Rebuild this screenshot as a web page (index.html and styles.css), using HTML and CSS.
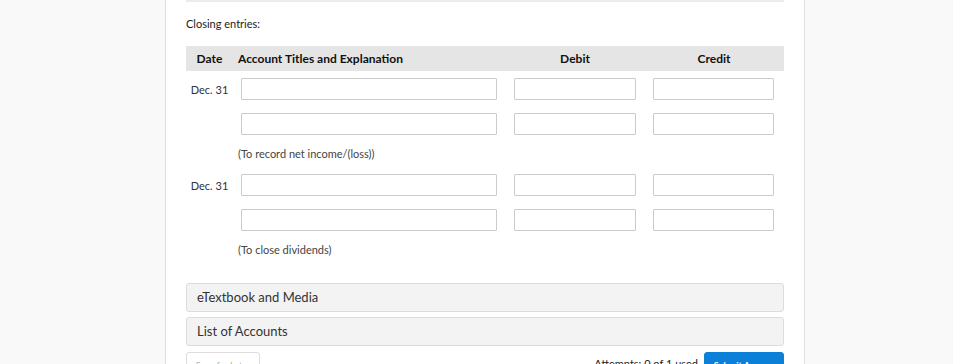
FILE: index.html
```html
<!DOCTYPE html>
<html lang="en">

<head>
    <meta charset="UTF-8">
    <title>Closing entries</title>
    <link rel="stylesheet" href="styles.css">
</head>

<body>

    <div class="page">
        <div class="page__panel">

            <div class="page__topbar"></div>

            <p class="entry__label">Closing entries:</p>

            <div class="journal">
                <div class="journal__head">
                    <div class="journal__date">Date</div>
                    <div class="journal__account">Account Titles and Explanation</div>
                    <div class="journal__amount"><span>Debit</span></div>
                    <div class="journal__amount"><span>Credit</span></div>
                </div>

                <!-- entry 1 -->
                <div class="journal__row">
                    <div class="journal__date">Dec. 31</div>
                    <div class="journal__account"><input class="field field--account" type="text"></div>
                    <div class="journal__amount"><input class="field field--debit" type="text"></div>
                    <div class="journal__amount"><input class="field field--credit" type="text"></div>
                </div>
                <div class="journal__row">
                    <div class="journal__date"></div>
                    <div class="journal__account"><input class="field field--account" type="text"></div>
                    <div class="journal__amount"><input class="field field--debit" type="text"></div>
                    <div class="journal__amount"><input class="field field--credit" type="text"></div>
                </div>
                <p class="journal__note">(To record net income/(loss))</p>

                <!-- entry 2 -->
                <div class="journal__row">
                    <div class="journal__date">Dec. 31</div>
                    <div class="journal__account"><input class="field field--account" type="text"></div>
                    <div class="journal__amount"><input class="field field--debit" type="text"></div>
                    <div class="journal__amount"><input class="field field--credit" type="text"></div>
                </div>
                <div class="journal__row">
                    <div class="journal__date"></div>
                    <div class="journal__account"><input class="field field--account" type="text"></div>
                    <div class="journal__amount"><input class="field field--debit" type="text"></div>
                    <div class="journal__amount"><input class="field field--credit" type="text"></div>
                </div>
                <p class="journal__note journal__note--last">(To close dividends)</p>
            </div>

            <div class="accordion">eTextbook and Media</div>
            <div class="accordion">List of Accounts</div>

            <div class="actions">
                <button class="btn btn--save">Save for Later</button>
                <div class="actions__right">
                    <span class="actions__attempts">Attempts: 0 of 1 used</span>
                    <button class="btn btn--submit">Submit Answer</button>
                </div>
            </div>

        </div>
    </div>

</body>

</html>
```

FILE: styles.css
```css
* {
    padding: 0;
    margin: 0;
    box-sizing: border-box;
}

body {
    background-color: #f9f9f9;
    font-family: Lato, "Liberation Sans", sans-serif;
    color: #333;
    height: 364px;
    overflow: hidden;
}

.page {
    width: 640px;
    margin-left: 165px;
}

.page__panel {
    background-color: #fff;
    border-left: 1px solid #e0e0e0;
    border-right: 1px solid #e0e0e0;
    padding: 0 20px;
    min-height: 400px;
}

.page__topbar {
    height: 2px;
    background-color: #ececec;
}

.entry__label {
    font-size: 11px;
    line-height: 14px;
    color: #222;
    margin-top: 15px;
    margin-bottom: 15px;
}

.journal__head,
.journal__row {
    display: grid;
    grid-template-columns: 47px 281px 139px 1fr;
    align-items: center;
}

.journal__head {
    height: 25px;
    background-color: #e5e5e5;
    font-size: 12px;
    font-weight: bold;
    color: #111;
    margin-bottom: 7px;
}

.journal__row {
    height: 22px;
    margin-bottom: 13px;
    font-size: 11px;
}

.journal__head .journal__account {
    padding-left: 5px;
}

.journal__row .journal__account {
    padding-left: 8px;
}

.journal__date {
    text-align: center;
}

.journal__amount span {
    display: block;
    width: 122px;
    text-align: center;
}

.field {
    display: block;
    height: 22px;
    border: 1px solid #cbcbcb;
    border-radius: 1px;
    background-color: #fff;
}

.field--account {
    width: 256px;
}

.field--debit {
    width: 122px;
}

.field--credit {
    width: 121px;
}

.journal__note {
    font-size: 11px;
    line-height: 16px;
    color: #444;
    padding-left: 52px;
    margin-top: -2px;
    margin-bottom: 12px;
}

.journal__note--last {
    margin-bottom: 25px;
}

.accordion {
    height: 29px;
    border: 1px solid #dcdcdc;
    border-radius: 3px;
    background-color: #f3f3f3;
    font-size: 13px;
    line-height: 27px;
    padding-left: 10px;
    color: #333;
    margin-bottom: 5px;
}

.actions {
    display: flex;
    justify-content: space-between;
    align-items: flex-start;
    margin-top: 6px;
}

.actions__right {
    display: flex;
    align-items: flex-start;
    gap: 6px;
}

.actions__attempts {
    font-size: 11px;
    line-height: 14px;
    padding-top: 5px;
    color: #222;
    white-space: nowrap;
}

.btn {
    font-family: Lato, "Liberation Sans", sans-serif;
    height: 26px;
    border-radius: 3px;
    font-size: 9px;
    padding: 0 4px;
    white-space: nowrap;
}

.btn--save {
    background-color: #fff;
    border: 1px solid #ddd;
    color: #aaa;
    width: 74px;
}

.btn--submit {
    background-color: #0a80d8;
    border: 1px solid #0a80d8;
    color: #fff;
    font-weight: bold;
    width: 80px;
}
```
